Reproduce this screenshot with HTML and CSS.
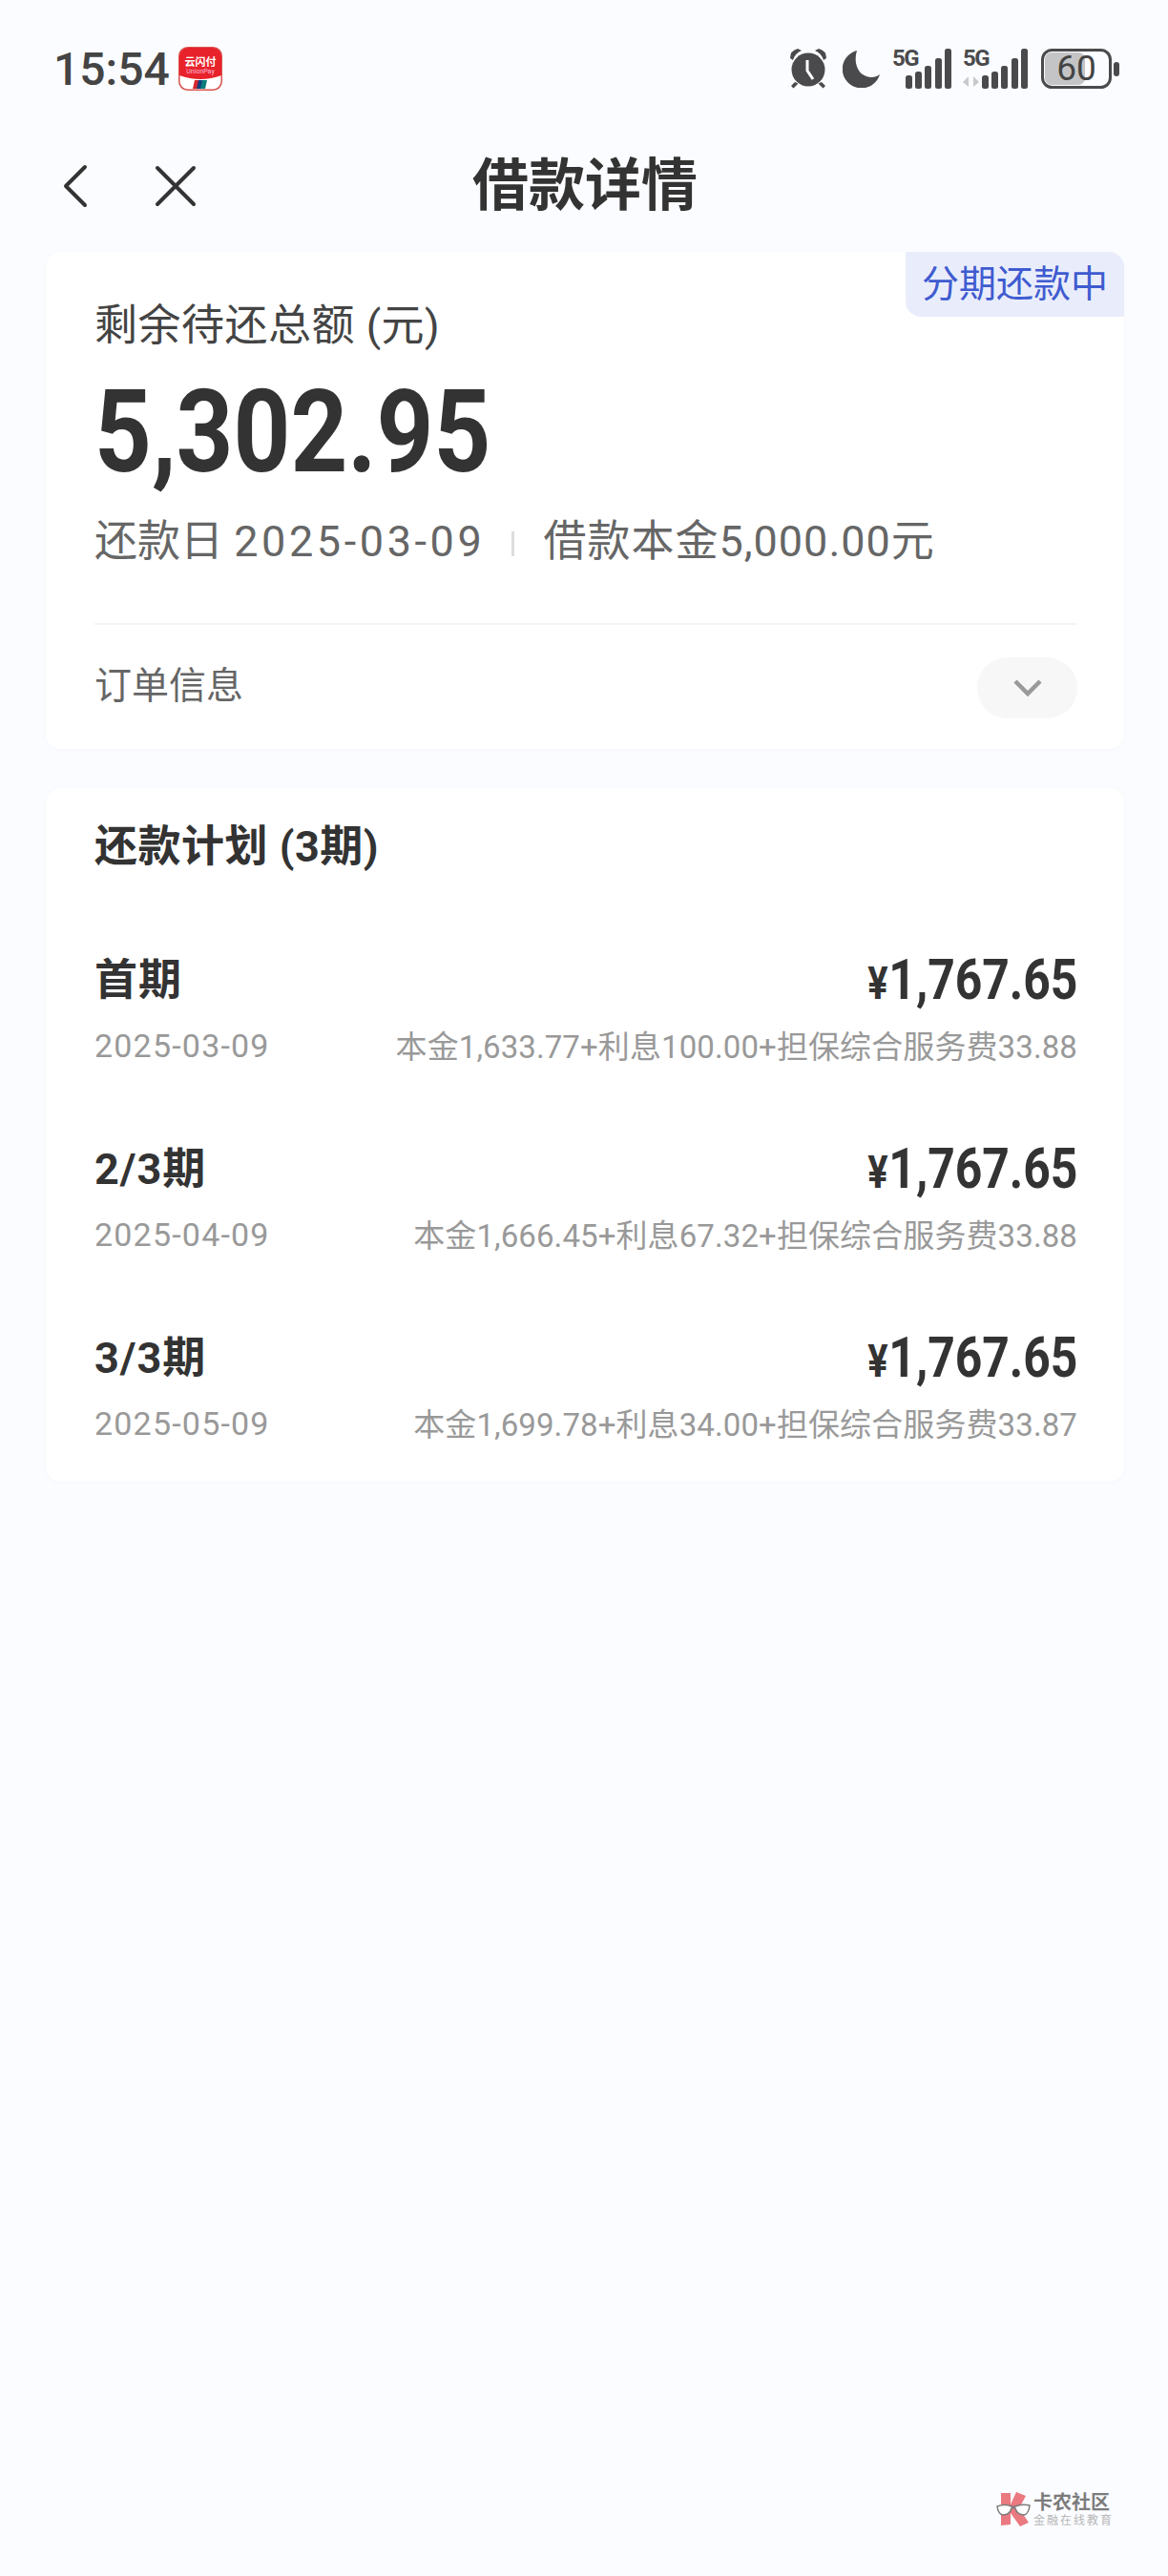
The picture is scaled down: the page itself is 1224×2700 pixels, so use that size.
FILE: index.html
```html
<!DOCTYPE html>
<html lang="zh-CN">
<head>
    <meta charset="UTF-8">
    <meta name="viewport" content="width=device-width,initial-scale=1.0">
    <title>借款详情</title>
    <link rel="stylesheet" href="styles.css">
</head>
<body>
    <!-- Status bar -->
    <div class="statusbar">
        <div class="status-left">
            <span class="time">15:54</span>
            <svg class="app-icon" width="46" height="46" viewBox="0 0 46 46">
                <rect x="0.75" y="0.75" width="44.5" height="44.5" rx="9" fill="#fff" stroke="#d9534f" stroke-width="1.5"/>
                <path d="M1 10a9 9 0 0 1 9-9h26a9 9 0 0 1 9 9v20q-22 8-44 0z" fill="#e8222a"/>
                <text x="23" y="20" class="app-name">云闪付</text>
                <text x="23" y="28" class="app-sub">UnionPay</text>
                <path d="M17 35h5l-2 9h-5z" fill="#d8262c"/>
                <path d="M21 35h5l-2 9h-5z" fill="#12407f"/>
                <path d="M25 35h5l-2 9h-5z" fill="#0d7d79"/>
            </svg>
        </div>
        <div class="status-right">
            <svg width="42" height="44" viewBox="0 0 42 44">
                <path d="M2 11 Q2 3 10 1 L14 3 Q7 6 5 13z M40 11 Q40 3 32 1 L28 3 Q35 6 37 13z" fill="#4a4a4c"/>
                <circle cx="21" cy="23" r="17.5" fill="#4a4a4c"/>
                <path d="M7 36l-4 4 2.5 2.5 5-5z M35 36l4 4-2.5 2.5-5-5z" fill="#4a4a4c"/>
                <path d="M20 13v11l6 9" fill="none" stroke="#fff" stroke-width="3"/>
            </svg>
            <svg class="moon" width="40" height="40" viewBox="0 0 40 40">
                <path d="M15 1A20 20 0 1 0 39 26C34 30 27 30 21 26 14 21 12 10 15 1z" fill="#4a4a4c"/>
            </svg>
            <svg class="signal" width="62" height="50" viewBox="0 -8 62 50">
                <text x="0" y="18" class="net">5G</text>
                <rect x="14" y="28" width="7" height="14" rx="2.5" fill="#4a4a4c"/>
                <rect x="24" y="24" width="7" height="18" rx="2.5" fill="#4a4a4c"/>
                <rect x="34" y="18" width="7" height="24" rx="2.5" fill="#4a4a4c"/>
                <rect x="45" y="10" width="7" height="32" rx="2.5" fill="#4a4a4c"/>
                <rect x="55" y="0" width="7" height="42" rx="2.5" fill="#4a4a4c"/>
            </svg>
            <svg class="signal" width="68" height="50" viewBox="0 -8 68 50">
                <text x="0" y="18" class="net">5G</text>
                <path d="M0 35l6-6v11z M11 29l6 6-6 5z" fill="#c9c9cb"/>
                <rect x="20" y="28" width="7" height="14" rx="2.5" fill="#4a4a4c"/>
                <rect x="30" y="24" width="7" height="18" rx="2.5" fill="#4a4a4c"/>
                <rect x="40" y="18" width="7" height="24" rx="2.5" fill="#4a4a4c"/>
                <rect x="51" y="10" width="7" height="32" rx="2.5" fill="#4a4a4c"/>
                <rect x="61" y="0" width="7" height="42" rx="2.5" fill="#4a4a4c"/>
            </svg>
            <svg class="battery" width="82" height="42" viewBox="0 0 82 42">
                <rect x="4" y="4" width="42" height="34" rx="7" fill="#c4c4c6"/>
                <rect x="1.5" y="1.5" width="71" height="39" rx="10" fill="none" stroke="#4a4a4c" stroke-width="3"/>
                <text x="37" y="33" class="batt-num">60</text>
                <rect x="76" y="14" width="6" height="15" rx="3" fill="#4a4a4c"/>
            </svg>
        </div>
    </div>

    <!-- Nav bar -->
    <div class="navbar">
        <div class="nav-icons">
            <svg width="30" height="46" viewBox="0 0 30 46"><path d="M25 3L5 23l20 20" fill="none" stroke="#333" stroke-width="4" stroke-linecap="round" stroke-linejoin="round"/></svg>
            <svg width="44" height="44" viewBox="0 0 44 44"><path d="M3 3l38 38M41 3L3 41" fill="none" stroke="#333" stroke-width="4" stroke-linecap="round"/></svg>
        </div>
        <h1 class="nav-title">借款详情</h1>
    </div>

    <main class="content">
        <!-- Summary card -->
        <section class="card summary">
            <span class="badge">分期还款中</span>
            <div class="label">剩余待还总额 (元)</div>
            <div class="total">5,302.95</div>
            <div class="meta">
                <span>还款日 <span class="meta-date">2025-03-09</span></span>
                <i class="meta-sep"></i>
                <span class="meta-loan">借款本金5,000.00元</span>
            </div>
            <div class="order-row">
                <span class="order-text">订单信息</span>
                <span class="order-btn">
                    <svg width="32" height="20" viewBox="0 0 32 20"><path d="M3 3l13 13L29 3" fill="none" stroke="#999" stroke-width="4.5"/></svg>
                </span>
            </div>
        </section>

        <!-- Plan card -->
        <section class="card plan">
            <h2 class="plan-title">还款计划 (3期)</h2>
            <div class="plan-list">
                <div class="plan-row">
                    <div class="plan-top">
                        <span class="term">首期</span>
                        <span class="amount"><small>¥</small>1,767.65</span>
                    </div>
                    <div class="plan-bottom">
                        <span class="date">2025-03-09</span>
                        <span class="detail">本金1,633.77+利息100.00+担保综合服务费33.88</span>
                    </div>
                </div>
                <div class="plan-row">
                    <div class="plan-top">
                        <span class="term">2/3期</span>
                        <span class="amount"><small>¥</small>1,767.65</span>
                    </div>
                    <div class="plan-bottom">
                        <span class="date">2025-04-09</span>
                        <span class="detail">本金1,666.45+利息67.32+担保综合服务费33.88</span>
                    </div>
                </div>
                <div class="plan-row">
                    <div class="plan-top">
                        <span class="term">3/3期</span>
                        <span class="amount"><small>¥</small>1,767.65</span>
                    </div>
                    <div class="plan-bottom">
                        <span class="date">2025-05-09</span>
                        <span class="detail">本金1,699.78+利息34.00+担保综合服务费33.87</span>
                    </div>
                </div>
            </div>
        </section>
    </main>

    <!-- Watermark -->
    <div class="watermark">
        <svg width="36" height="36" viewBox="0 0 36 36">
            <path d="M5 1h10v12l6-13 10 4-7 13 10 15-9 4-10-14v12l-10 1z" fill="#e8636b"/>
            <path d="M1 15q8-3 15 0 2 1 4 0 7-3 15-1-1 9-6 10-7 0-9-7-2-1-4 0-2 7-9 7-5-1-6-9z" fill="#fff" stroke="#666" stroke-width="1.5"/>
        </svg>
        <div class="wm-text">
            <span class="wm-name">卡农社区</span>
            <span class="wm-sub">金融在线教育</span>
        </div>
    </div>
</body>
</html>
```
FILE: styles.css
```css
body {
    margin: 0;
    width: 1224px;
    height: 2700px;
    position: relative;
    overflow: hidden;
    background: #fbfcff;
    color: #333;
    font-family: Roboto, "Noto Sans CJK SC", sans-serif;
}
.statusbar {
    height: 144px;
    box-sizing: border-box;
    padding: 0 51px 0 56px;
    display: flex;
    align-items: center;
    justify-content: space-between;
}
.status-left {
    display: flex;
    align-items: center;
    gap: 9px;
}
.time {
    font-size: 48px;
    font-weight: 500;
    color: #444;
}
.app-name {
    font-size: 11px;
    font-weight: 700;
    fill: #fff;
    text-anchor: middle;
}
.app-sub {
    font-size: 7px;
    fill: #fbd;
    text-anchor: middle;
}
.status-right {
    display: flex;
    align-items: center;
    gap: 12px;
}
.moon {
    margin-left: 3px;
}
.signal {
    margin-top: -8px;
}
.net {
    font-size: 24px;
    font-weight: 700;
    fill: #4a4a4c;
    letter-spacing: -1.5px;
}
.batt-num {
    font-size: 37px;
    fill: #444;
    text-anchor: middle;
}
.battery {
    margin-left: 2px;
}
.navbar {
    height: 120px;
    box-sizing: border-box;
    padding: 0 0 18px 64px;
    display: flex;
    align-items: center;
    position: relative;
}
.nav-icons {
    display: flex;
    align-items: center;
    gap: 68px;
}
.nav-title {
    position: absolute;
    left: 2px;
    right: 0;
    top: 18px;
    margin: 0;
    text-align: center;
    font-size: 59px;
    line-height: 66px;
    font-weight: 700;
    color: #333;
}
.content {
    padding: 0 46px 0 48px;
    display: flex;
    flex-direction: column;
    gap: 41px;
}
.card {
    background: #fff;
    border-radius: 16px;
    padding-left: 51px;
    padding-right: 49px;
    position: relative;
    box-shadow: 0 1px 4px rgba(120, 130, 170, 0.04);
}
.summary {
    height: 521px;
    box-sizing: border-box;
    padding-top: 54px;
}
.badge {
    position: absolute;
    top: 0;
    right: 0;
    width: 229px;
    height: 68px;
    line-height: 68px;
    text-align: center;
    background: #e9edfb;
    color: #3f5bd0;
    font-size: 39px;
    border-radius: 0 16px 0 16px;
}
.label {
    font-size: 45px;
    line-height: 48px;
    letter-spacing: 0.5px;
    color: #444;
}
.total {
    margin-top: 27px;
    margin-bottom: -3px;
    font-size: 120px;
    line-height: 120px;
    font-weight: 700;
    color: #333;
    transform: scaleX(0.87);
    transform-origin: left center;
}
.meta {
    margin-top: 28px;
    font-size: 45px;
    line-height: 60px;
    color: #666;
    display: flex;
    align-items: center;
}
.meta-date {
    letter-spacing: 3.6px;
}
.meta-loan {
    letter-spacing: 1px;
}
.meta-sep {
    width: 3px;
    height: 26px;
    background: #ddd;
    margin: 4px 30px 0 28px;
}
.order-row {
    margin-top: 55px;
    border-top: 2px solid #f4f4f5;
    padding-top: 34px;
    display: flex;
    justify-content: space-between;
    align-items: center;
}
.order-text {
    font-size: 39px;
    color: #666;
    margin-top: -12px;
}
.order-btn {
    width: 105px;
    height: 64px;
    border-radius: 32px;
    background: #f7f7f8;
    display: flex;
    align-items: center;
    justify-content: center;
}
.plan {
    height: 727px;
    box-sizing: border-box;
    padding-top: 38px;
}
.plan-title {
    margin: 0;
    font-size: 45px;
    line-height: 48px;
    font-weight: 700;
    letter-spacing: 0.5px;
}
.plan-list {
    margin-top: 84px;
    display: flex;
    flex-direction: column;
    gap: 73px;
}
.plan-top,
.plan-bottom {
    display: flex;
    justify-content: space-between;
    align-items: center;
}
.plan-top {
    height: 60px;
}
.plan-bottom {
    height: 50px;
    margin-top: 15px;
}
.term {
    font-size: 45px;
    font-weight: 700;
    letter-spacing: 1px;
    margin-top: -6px;
}
.amount {
    display: inline-block;
    font-size: 60px;
    font-weight: 700;
    transform: scaleX(0.83);
    transform-origin: right center;
}
.amount small {
    font-size: 48px;
    margin-right: 1px;
}
.date {
    font-size: 34px;
    color: #999;
    letter-spacing: 1.2px;
}
.detail {
    font-size: 33px;
    color: #999;
    letter-spacing: 0.1px;
    margin-top: -2px;
}
.watermark {
    position: absolute;
    left: 1044px;
    top: 2612px;
    display: flex;
    align-items: center;
    gap: 3px;
    opacity: 0.85;
}
.wm-text {
    display: flex;
    flex-direction: column;
    line-height: 1;
}
.wm-name {
    font-size: 20px;
    font-weight: 700;
    color: #666;
}
.wm-sub {
    font-size: 12px;
    color: #aaa;
    letter-spacing: 2px;
    margin-top: 3px;
}
```
